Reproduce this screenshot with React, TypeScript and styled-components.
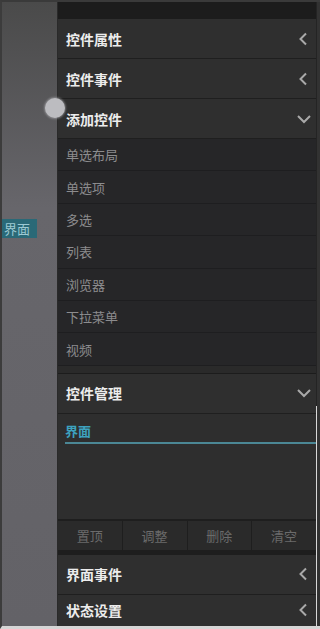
import React from "react";
import styled, { createGlobalStyle } from "styled-components";

const GlobalStyle = createGlobalStyle`
  html, body {
    margin: 0;
    padding: 0;
    background: #2d2d2d;
  }
  * {
    box-sizing: border-box;
  }
`;

const Frame = styled.div`
  width: 320px;
  height: 629px;
  display: flex;
  overflow: hidden;
  border-left: 2px solid #3c3c3c;
  border-top: 2px solid #3a3a3a;
  border-bottom: 3px solid #d6d6d6;
  font-family: "Noto Sans CJK SC", "Noto Sans", sans-serif;
  background: #333333;
`;

const SidePanel = styled.div`
  width: 56px;
  flex-shrink: 0;
  position: relative;
  border-right: 1px solid #2a2a2a;
  background: linear-gradient(#4a4a4a 0%, #67666b 33%, #636267 100%);
`;

const Handle = styled.div`
  position: absolute;
  left: 43px;
  top: 96px;
  width: 20px;
  height: 20px;
  border-radius: 50%;
  background: #bcbcc0;
  box-shadow: 0 0 2px 1px rgba(190, 190, 195, 0.45);
  z-index: 2;
`;

const PageTag = styled.div`
  position: absolute;
  left: -2px;
  top: 217px;
  width: 37px;
  height: 19px;
  background: #2a6977;
  color: #9cc9d3;
  font-size: 13px;
  line-height: 19px;
  padding-left: 4px;
`;

const MainPanel = styled.div`
  width: 258px;
  flex-shrink: 0;
  display: flex;
  flex-direction: column;
  background: #2e2e2e;
`;

const Gutter = styled.div`
  flex: 1;
  display: flex;
  flex-direction: column;
  background: #323232;
  border-left: 1px solid #242424;
`;

const GutterLight = styled.div`
  margin-top: 404px;
  flex: 1;
  border-left: 1px solid #d8d8d8;
  margin-left: -1px;
`;

const TopBar = styled.div`
  height: 17px;
  background: #1c1c1c;
`;

const Header = styled.div<{ $last?: boolean }>`
  height: ${(p) => (p.$last ? "31px" : "40px")};
  display: flex;
  align-items: center;
  justify-content: space-between;
  padding: 0 8px 0 8px;
  background: #2f2f2f;
  border-bottom: ${(p) => (p.$last ? "none" : "1px solid #1f1f1f")};
  color: #ececec;
  font-size: 14px;
  font-weight: bold;
  flex-shrink: 0;
`;

const List = styled.div`
  background: #262628;
  display: flex;
  flex-direction: column;
`;

const ListItem = styled.div`
  height: 32.4px;
  display: flex;
  align-items: center;
  padding-left: 8px;
  color: #8c8c8e;
  font-size: 13px;
  border-bottom: 1px solid #1e1e20;
`;

const ListFooter = styled.div`
  height: 8px;
  background: #2a2a2a;
  border-bottom: 1px solid #1c1c1c;
  flex-shrink: 0;
`;

const ManagerBody = styled.div`
  height: 105px;
  padding: 8px 0 0 7px;
  background: #2e2e2e;
  flex-shrink: 0;
`;

const PageName = styled.div`
  color: #3da2bf;
  font-size: 13px;
  font-weight: bold;
  height: 22px;
  line-height: 18px;
  border-bottom: 2px solid #4b8795;
`;

const ButtonRow = styled.div`
  display: grid;
  grid-template-columns: repeat(4, 1fr);
  gap: 1px;
  height: 31px;
  background: #1e1e1e;
  border-top: 2px solid #1e1e1e;
  flex-shrink: 0;
`;

const ActionButton = styled.div`
  display: flex;
  align-items: center;
  justify-content: center;
  background: #2a2a2a;
  color: #6b6b6b;
  font-size: 13px;
`;

const Band = styled.div`
  height: 5px;
  background: #1e1e1e;
  flex-shrink: 0;
`;

const DownIcon = styled.svg`
  margin-right: -4px;
`;

const ChevronLeft = () => (
  <svg width="10" height="14" viewBox="0 0 10 14">
    <path d="M8 1.5 L2.5 7 L8 12.5" fill="none" stroke="#a9a9a9" strokeWidth="2" />
  </svg>
);

const ChevronDown = () => (
  <DownIcon width="16" height="10" viewBox="0 0 16 10">
    <path d="M2 2 L8 8 L14 2" fill="none" stroke="#a9a9a9" strokeWidth="2" />
  </DownIcon>
);

const widgets = ["单选布局", "单选项", "多选", "列表", "浏览器", "下拉菜单", "视频"];
const actions = ["置顶", "调整", "删除", "清空"];

export default function App() {
  return (
    <>
      <GlobalStyle />
      <Frame>
        <SidePanel>
          <Handle />
          <PageTag>界面</PageTag>
        </SidePanel>
        <MainPanel>
          <TopBar />
          <Header>
            控件属性
            <ChevronLeft />
          </Header>
          <Header>
            控件事件
            <ChevronLeft />
          </Header>
          <Header>
            添加控件
            <ChevronDown />
          </Header>
          <List>
            {widgets.map((w) => (
              <ListItem key={w}>{w}</ListItem>
            ))}
          </List>
          <ListFooter />
          <Header>
            控件管理
            <ChevronDown />
          </Header>
          <ManagerBody>
            <PageName>界面</PageName>
          </ManagerBody>
          <ButtonRow>
            {actions.map((a) => (
              <ActionButton key={a}>{a}</ActionButton>
            ))}
          </ButtonRow>
          <Band />
          <Header>
            界面事件
            <ChevronLeft />
          </Header>
          <Header $last>
            状态设置
            <ChevronLeft />
          </Header>
        </MainPanel>
        <Gutter>
          <GutterLight />
        </Gutter>
      </Frame>
    </>
  );
}
